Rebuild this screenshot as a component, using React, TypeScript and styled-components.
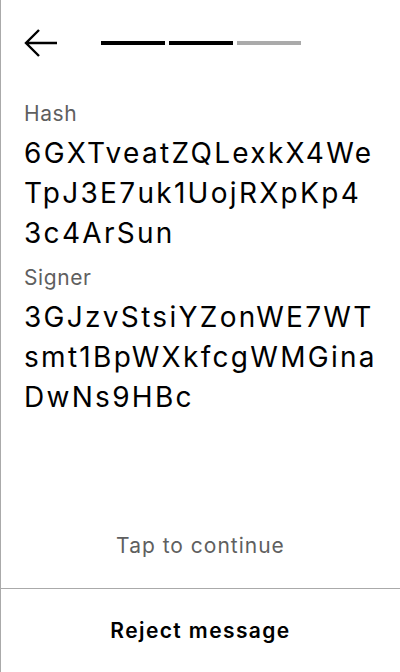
import React from "react";
import styled, { createGlobalStyle } from "styled-components";

const Global = createGlobalStyle`
  html, body { margin: 0; padding: 0; background: #fff; }
  body { font-family: Inter, "Noto Sans", sans-serif; }
  * { box-sizing: border-box; }
`;

const Screen = styled.div`
  width: 400px;
  height: 672px;
  display: flex;
  flex-direction: column;
  border-left: 1px solid #aaaaaa;
  background: #fff;
  color: #000;
`;

const Header = styled.div`
  display: flex;
  align-items: center;
  height: 86px;
  padding: 0 23px;
  gap: 43px;
`;

const BackButton = styled.button`
  border: none;
  background: none;
  padding: 0;
  width: 34px;
  height: 30px;
  display: flex;
  align-items: center;
  cursor: pointer;
`;

const Progress = styled.div`
  display: flex;
  gap: 4px;
`;

const Segment = styled.div<{ $active: boolean }>`
  width: 64px;
  height: 4px;
  background: ${(p) => (p.$active ? "#000" : "#aaaaaa")};
`;

const Content = styled.div`
  padding: 0 23px;
  display: flex;
  flex-direction: column;
`;

const Label = styled.div`
  font-size: 21px;
  line-height: 28px;
  letter-spacing: 0.6px;
  color: #5f5f5f;
  margin-top: 14px;
`;

const Value = styled.div`
  font-size: 28px;
  line-height: 40px;
  letter-spacing: 2.3px;
  word-break: break-all;
  margin-top: 5px;
  margin-bottom: -3px;
`;

const Spacer = styled.div`
  flex: 1;
`;

const Hint = styled.div`
  text-align: center;
  font-size: 21px;
  line-height: 28px;
  letter-spacing: 1px;
  color: #5f5f5f;
  margin-bottom: 28px;
`;

const Footer = styled.button`
  border: none;
  border-top: 1px solid #aaaaaa;
  background: none;
  height: 84px;
  width: 100%;
  font-family: Inter, "Noto Sans", sans-serif;
  font-size: 21px;
  font-weight: 600;
  letter-spacing: 1.4px;
  color: #000;
  cursor: pointer;
`;

export default function App() {
  return (
    <>
      <Global />
      <Screen>
        <Header>
          <BackButton aria-label="Back">
            <svg width="34" height="30" viewBox="0 0 34 30" fill="none">
              <path d="M33 15H3M15 2L2 15L15 28" stroke="#000" strokeWidth="2.4" />
            </svg>
          </BackButton>
          <Progress>
            <Segment $active />
            <Segment $active />
            <Segment $active={false} />
          </Progress>
        </Header>
        <Content>
          <Label>Hash</Label>
          <Value>6GXTveatZQLexkX4WeTpJ3E7uk1UojRXpKp43c4ArSun</Value>
          <Label>Signer</Label>
          <Value>3GJzvStsiYZonWE7WTsmt1BpWXkfcgWMGinaDwNs9HBc</Value>
        </Content>
        <Spacer />
        <Hint>Tap to continue</Hint>
        <Footer>Reject message</Footer>
      </Screen>
    </>
  );
}
